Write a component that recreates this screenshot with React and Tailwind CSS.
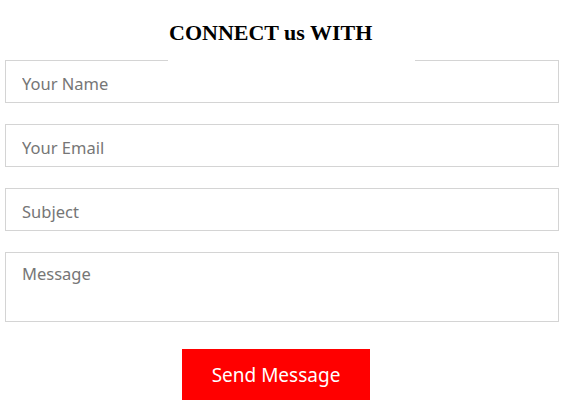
export default function App() {
  const fields = ['Your Name', 'Your Email', 'Subject'];

  return (
    <div className="w-[569px] h-[417px] bg-white overflow-hidden">
      <div className="pl-[5px] pr-[10px]">
        {/* Heading */}
        <div className="relative z-10 ml-[163px] w-[247px] h-[61px] -mb-px bg-white pt-[22px]">
          <h2
            className="text-[22px] font-bold text-black leading-none pl-[1px]"
            style={{ fontFamily: '"Liberation Serif", "Times New Roman", serif' }}
          >
            CONNECT us WITH
          </h2>
        </div>

        {/* Form */}
        <form className="flex flex-col gap-[21px]" style={{ fontFamily: '"Noto Sans", "Open Sans", sans-serif' }}>
          {fields.map((f) => (
            <input
              key={f}
              placeholder={f}
              className="w-full h-[43px] border border-[#d4d4d4] px-4 pt-[3px] text-[16.5px] text-gray-700 placeholder:text-[#767676] outline-none"
            />
          ))}
          <textarea
            placeholder="Message"
            className="w-full h-[70px] border border-[#d4d4d4] px-4 pt-[9px] text-[16.5px] placeholder:text-[#767676] outline-none resize-none"
          />
          <div className="flex pl-[177px] pt-[6px]">
            <button
              type="button"
              className="w-[188px] h-[51px] bg-[#ff0000] text-white text-[19px] pt-[2px]"
            >
              Send Message
            </button>
          </div>
        </form>
      </div>
    </div>
  );
}
